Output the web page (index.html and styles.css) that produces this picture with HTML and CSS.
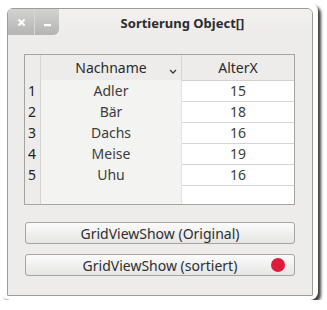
FILE: index.html
```html
<!DOCTYPE html>
<html lang="de">
  <head>
    <meta charset="UTF-8" />
    <title>Sortierung Object[]</title>
    <link rel="stylesheet" href="styles.css">
  </head>
  <body>
    <div class="frame">
      <div class="window">
        <div class="titlebar">
          <div class="wm-buttons">
            <span class="wm-btn close">
              <svg width="9" height="9" viewBox="0 0 9 9"><path d="M1.5 1.5 L7.5 7.5 M7.5 1.5 L1.5 7.5" stroke="#fff" stroke-width="2.2"/></svg>
            </span>
            <span class="wm-btn minimize">
              <svg width="7" height="3" viewBox="0 0 7 3"><rect x="0" y="0" width="7" height="2.2" fill="#fff"/></svg>
            </span>
          </div>
          <div class="title">Sortierung Object[]</div>
        </div>

        <div class="grid">
          <div class="row head">
            <div class="cell num"></div>
            <div class="cell name">Nachname<span class="sort">
              <svg width="8" height="5" viewBox="0 0 8 5"><path d="M1 1 L4 4 L7 1" fill="none" stroke="#3c3c3c" stroke-width="1.3"/></svg>
            </span></div>
            <div class="cell age">AlterX</div>
          </div>
          <div class="row"><div class="cell num">1</div><div class="cell name">Adler</div><div class="cell age">15</div></div>
          <div class="row"><div class="cell num">2</div><div class="cell name">Bär</div><div class="cell age">18</div></div>
          <div class="row"><div class="cell num">3</div><div class="cell name">Dachs</div><div class="cell age">16</div></div>
          <div class="row"><div class="cell num">4</div><div class="cell name">Meise</div><div class="cell age">19</div></div>
          <div class="row"><div class="cell num">5</div><div class="cell name">Uhu</div><div class="cell age">16</div></div>
          <div class="row filler"><div class="cell num"></div><div class="cell name"></div><div class="cell age"></div></div>
        </div>

        <div class="actions">
          <button class="btn">GridViewShow (Original)</button>
          <button class="btn">GridViewShow (sortiert)<span class="dot"></span></button>
        </div>
      </div>
    </div>
  </body>
</html>
```

FILE: styles.css
```css
body {
  margin: 0;
  background: #fff;
  font-family: "Noto Sans", "DejaVu Sans", sans-serif;
  color: #3c3c3c;
}

.frame {
  box-sizing: border-box;
  width: 316px;
  height: 297px;
  margin: 3px 0 0 2px;
  padding: 5px;
  background: #fff;
  border-radius: 8px;
  box-shadow: 3px 3px 3px rgba(0, 0, 0, 0.75);
}

.window {
  box-sizing: border-box;
  height: 288px;
  border: 1px solid #9c9c9a;
  border-radius: 6px 6px 1px 1px;
  background: #edeceb;
  display: flex;
  flex-direction: column;
}

.titlebar {
  height: 26px;
  display: flex;
  align-items: stretch;
  position: relative;
  border-radius: 5px 5px 0 0;
  background: linear-gradient(#f2f1f0, #edeceb);
}

.wm-buttons {
  display: flex;
  gap: 1px;
  background: #d6d6d4;
  border-radius: 5px 0 6px 0;
  overflow: hidden;
}

.wm-btn {
  display: flex;
  align-items: center;
  justify-content: center;
  background: linear-gradient(#d3d3d1, #b4b4b2);
}

.close {
  width: 26px;
}

.minimize {
  width: 24px;
  padding-top: 6px;
  box-sizing: border-box;
}

.title {
  flex: 1;
  text-align: center;
  font-weight: bold;
  font-size: 13px;
  line-height: 28px;
  color: #2c2c2c;
  padding-right: 6px;
}

.grid {
  box-sizing: border-box;
  margin: 19px 0 0 16px;
  width: 271px;
  height: 151px;
  border: 1px solid #a4a4a2;
  display: flex;
  flex-direction: column;
  background: #fff;
}

.row {
  display: grid;
  grid-template-columns: 16px 141px 112px;
  height: 21px;
  font-size: 14px;
  line-height: 21px;
}

.row .cell {
  box-sizing: border-box;
  border-bottom: 1px solid #d6d6d4;
  text-align: center;
}

.row.head {
  height: 25px;
  line-height: 25px;
  background: #edeceb;
}

.row.head .cell {
  border-bottom: 1px solid #d2d1cf;
  border-right: 1px solid #d6d5d3;
  color: #2a2a2a;
}

.row.head .age {
  border-right: none;
}

.cell.num {
  background: #edeceb;
  border-right: 1px solid #d6d5d3;
  text-align: left;
  padding-left: 3px;
  color: #222;
}

.cell.name {
  background: #f3f3f2;
  border-right: 1px solid #e2e2e0;
  position: relative;
}

.row.head .cell.name {
  background: #edeceb;
}

.sort {
  position: absolute;
  right: 4px;
  top: 1px;
}

.row.filler {
  flex: 1;
}

.row.filler .cell {
  border-bottom: none;
}

.actions {
  display: flex;
  flex-direction: column;
  gap: 10px;
  margin: 17px 0 0 17px;
  width: 270px;
}

.btn {
  position: relative;
  height: 22px;
  padding: 0;
  border: 1px solid #a6a6a4;
  border-radius: 3px;
  background: linear-gradient(#fbfbfb, #e6e6e5);
  font-family: "Noto Sans", "DejaVu Sans", sans-serif;
  font-size: 14px;
  line-height: 19px;
  color: #2e2e2e;
}

.dot {
  position: absolute;
  right: 9px;
  top: 3px;
  width: 14px;
  height: 14px;
  border-radius: 50%;
  background: #e01b3a;
}
```
